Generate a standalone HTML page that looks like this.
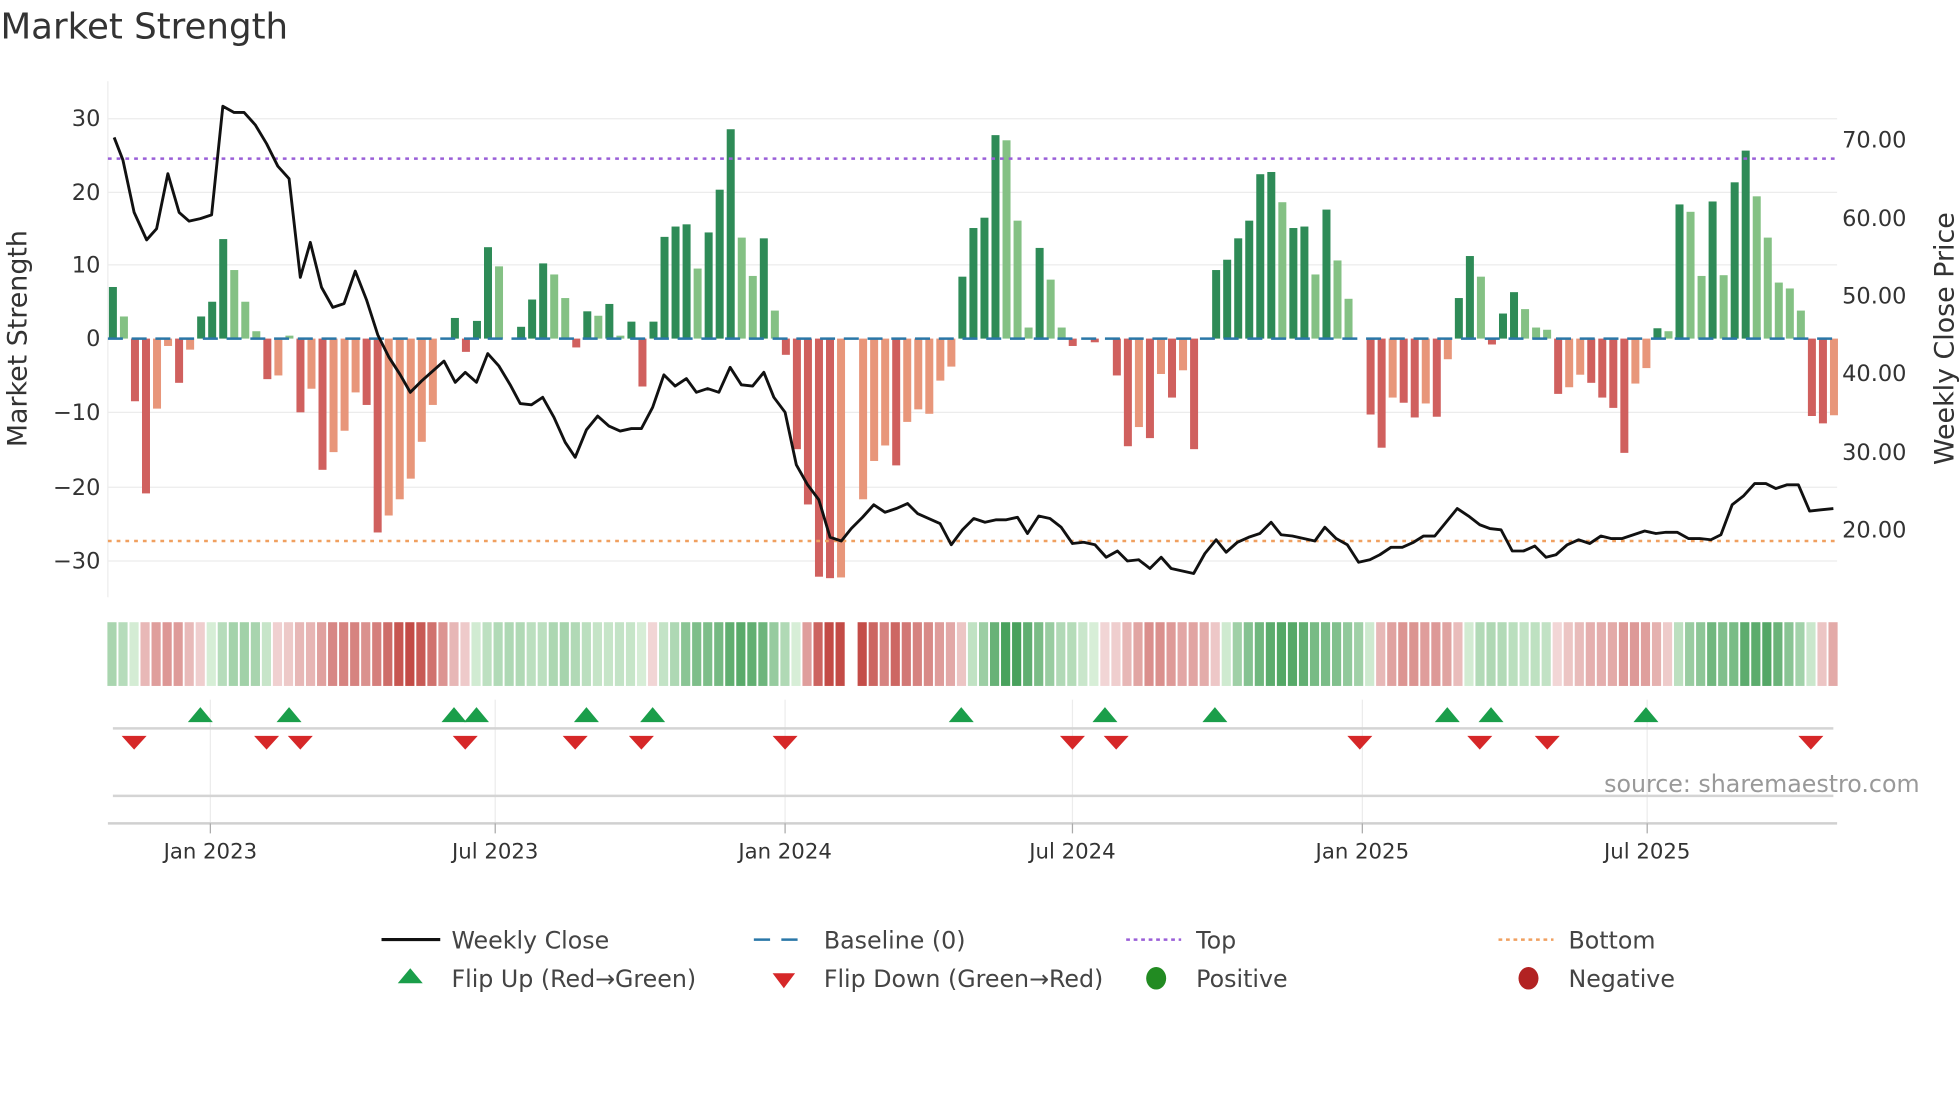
<!DOCTYPE html>
<html><head><meta charset="utf-8"><style>
html,body{margin:0;padding:0;background:#fff}
svg{display:block}
text{font-family:"DejaVu Sans","Liberation Sans",sans-serif}
</style></head><body>
<svg id="s" width="1960" height="1102" viewBox="0 0 1568 882" xmlns="http://www.w3.org/2000/svg">
<rect width="1568" height="882" fill="#fff"/>
<text x="0" y="31" font-size="28.5" fill="#333">Market Strength</text>
<g id="grid" stroke="#ececec" stroke-width="1">
<line x1="86" y1="95" x2="1470" y2="95"/><line x1="86" y1="154" x2="1470" y2="154"/><line x1="86" y1="212" x2="1470" y2="212"/>
<line x1="86" y1="330" x2="1470" y2="330"/><line x1="86" y1="390" x2="1470" y2="390"/><line x1="86" y1="449" x2="1470" y2="449"/>
<line x1="86" y1="65" x2="86" y2="478"/>
<line x1="168" y1="560" x2="168" y2="659"/><line x1="396" y1="560" x2="396" y2="659"/><line x1="628" y1="560" x2="628" y2="659"/>
<line x1="858" y1="560" x2="858" y2="659"/><line x1="1090" y1="560" x2="1090" y2="659"/><line x1="1318" y1="560" x2="1318" y2="659"/>
</g>
<g font-size="18" fill="#333" text-anchor="end">
<text x="80" y="101">30</text><text x="80" y="160">20</text><text x="80" y="218">10</text><text x="80" y="277">0</text>
<text x="80" y="336">−10</text><text x="80" y="396">−20</text><text x="80" y="455">−30</text>
</g>
<g font-size="18" fill="#333">
<text x="1474" y="118">70.00</text><text x="1474" y="181">60.00</text><text x="1474" y="243">50.00</text>
<text x="1474" y="305">40.00</text><text x="1474" y="368">30.00</text><text x="1474" y="430">20.00</text>
</g>
<text transform="translate(21,271) rotate(-90)" font-size="21.5" fill="#333" text-anchor="middle">Market Strength</text>
<text transform="translate(1563,271) rotate(-90)" font-size="21.5" fill="#333" text-anchor="middle">Weekly Close Price</text>
<g id="bars"></g>
<line x1="86" y1="271" x2="1470" y2="271" stroke="#2a77a8" stroke-width="2" stroke-dasharray="12,7"/>
<line x1="86" y1="127" x2="1470" y2="127" stroke="#9a5fd8" stroke-width="2" stroke-dasharray="3,4"/>
<line x1="86" y1="433" x2="1470" y2="433" stroke="#f0a060" stroke-width="2" stroke-dasharray="3,4"/>
<polyline id="price" fill="none" stroke="#111" stroke-width="2.3" stroke-linejoin="round"/>
<g id="heat"></g>
<line x1="90" y1="583" x2="1467" y2="583" stroke="#d4d4d4" stroke-width="2"/>
<line x1="90" y1="637" x2="1467" y2="637" stroke="#d4d4d4" stroke-width="2"/>
<line x1="86" y1="659" x2="1470" y2="659" stroke="#d0d0d0" stroke-width="2"/>
<g stroke="#aaa" stroke-width="1"><line x1="168" y1="659" x2="168" y2="667"/><line x1="396" y1="659" x2="396" y2="667"/><line x1="628" y1="659" x2="628" y2="667"/><line x1="858" y1="659" x2="858" y2="667"/><line x1="1090" y1="659" x2="1090" y2="667"/><line x1="1318" y1="659" x2="1318" y2="667"/></g>
<g id="tri"></g>
<text x="1536" y="634" font-size="19" fill="#999" text-anchor="end">source: sharemaestro.com</text>
<g font-size="17" fill="#333" text-anchor="middle">
<text x="168" y="687">Jan 2023</text><text x="396" y="687">Jul 2023</text><text x="628" y="687">Jan 2024</text>
<text x="858" y="687">Jul 2024</text><text x="1090" y="687">Jan 2025</text><text x="1318" y="687">Jul 2025</text>
</g>
<g font-size="19" fill="#444">
<line x1="305" y1="752" x2="352" y2="752" stroke="#111" stroke-width="2.5"/><text x="361" y="759">Weekly Close</text>
<line x1="603" y1="752" x2="647" y2="752" stroke="#2a77a8" stroke-width="2" stroke-dasharray="13,9"/><text x="659" y="759">Baseline (0)</text>
<line x1="901" y1="752" x2="945" y2="752" stroke="#9a5fd8" stroke-width="2" stroke-dasharray="3,3"/><text x="957" y="759">Top</text>
<line x1="1199" y1="752" x2="1243" y2="752" stroke="#f0a060" stroke-width="2" stroke-dasharray="3,3"/><text x="1255" y="759">Bottom</text>
<polygon points="328,775 338,787 318,787" fill="#1a9e4a"/><text x="361" y="790">Flip Up (Red→Green)</text>
<polygon points="618,779 636,779 627,791" fill="#d62728"/><text x="659" y="790">Flip Down (Green→Red)</text>
<ellipse cx="925" cy="783" rx="8" ry="9" fill="#228b22"/><text x="957" y="790">Positive</text>
<ellipse cx="1223" cy="783" rx="8" ry="9" fill="#b22222"/><text x="1255" y="790">Negative</text>
</g>
</svg>
<script>
var NS="http://www.w3.org/2000/svg";
var D="7d,3l,-8.5r,-21r,-9.5s,-1s,-6r,-1.5s,3d,5d,13.5d,9.3l,5l,1l,-5.5r,-5s,0.4l,-10r,-6.8s,-17.8r,-15.4s,-12.5s,-7.3s,-9r,-26.3r,-24s,-21.8s,-19s,-14s,-9s,0s,2.8d,-1.8r,2.4d,12.4d,9.8l,0s,1.6d,5.3d,10.2d,8.7l,5.5l,-1.2r,3.7d,3.1l,4.7d,0.4l,2.3d,-6.5r,2.3d,13.8d,15.2d,15.5d,9.5l,14.4d,20.2d,28.4d,13.7l,8.5l,13.6d,3.8l,-2.2r,-15r,-22.5r,-32.3r,-32.5r,-32.4s,0s,-21.8s,-16.6s,-14.5s,-17.2r,-11.3s,-9.6s,-10.2s,-5.7s,-3.8s,8.4d,15d,16.4d,27.6d,26.9l,16l,1.5l,12.3d,8l,1.5l,-1r,0s,-0.5r,0s,-5r,-14.6r,-12s,-13.5r,-4.8s,-8r,-4.3s,-15r,0s,9.3d,10.7d,13.6d,16d,22.3d,22.6d,18.5l,15d,15.2d,8.7l,17.5d,10.6l,5.4l,0s,-10.3r,-14.8r,-8s,-8.7r,-10.7r,-8.8s,-10.6r,-2.8s,5.5d,11.2d,8.4l,-0.8r,3.4d,6.3d,4l,1.5l,1.2l,-7.5r,-6.6s,-4.9s,-6r,-8r,-9.4r,-15.5r,-6.1s,-4s,1.4d,1l,18.2d,17.2l,8.5l,18.6d,8.6l,21.2d,25.5d,19.3l,13.7l,7.6l,6.8l,3.8l,-10.5r,-11.5r,-10.4s".split(",");
var col={d:"#2e8b57",l:"#84c184",r:"#d0605e",s:"#e8967a"};
var n=D.length,x0=90,st=8.83;
var bars=document.getElementById("bars"),heat=document.getElementById("heat");
var vals=[];
D.forEach(function(t,i){var v=parseFloat(t),c=t.slice(-1);vals.push(v);
 if(v==0)return;var x=x0+i*st;if(x>1468)return;var h=Math.abs(v)*5.9,y=v>0?271-h:271;
 var r=document.createElementNS(NS,"rect");r.setAttribute("x",x-3.2);r.setAttribute("width",6.4);r.setAttribute("y",y);r.setAttribute("height",h);r.setAttribute("fill",col[c]);bars.appendChild(r);});
for(var i=0;i<n;i++){var s=0,k=0;for(var j=Math.max(0,i-3);j<=i;j++){s+=vals[j];k++;}var m=s/k;
 var a=Math.min(1,Math.abs(m)/22);var c;
 if(m>=0){c="rgb("+Math.round(215-(215-70)*a)+","+Math.round(238-(238-160)*a)+","+Math.round(215-(215-90)*a)+")";}
 else{c="rgb("+Math.round(242-(242-195)*a)+","+Math.round(215-(215-75)*a)+","+Math.round(215-(215-70)*a)+")";}
 if(i==67)continue;
 var xx=x0+i*st-4.4;if(xx>1467)continue;var w=Math.min(st-1.5,1471-xx);
 var r=document.createElementNS(NS,"rect");r.setAttribute("x",xx);r.setAttribute("width",w);r.setAttribute("y",498);r.setAttribute("height",51);r.setAttribute("fill",c);heat.appendChild(r);}
var P="91,110 98,128 107,170 117,192 125,183 134,139 143,170 151,177 160,175 169,172 178,85 187,90 195,90 204,100 213,115 222,133 231,143 240,222 248,194 257,230 266,246 275,243 284,217 293,240 302,268 311,286 320,300 328,314 337,305 346,297 355,289 364,306 372,298 381,306 390,283 399,293 408,308 416,323 425,324 434,318 443,334 452,354 460,366 469,344 478,333 487,341 496,345 505,343 513,343 522,326 531,300 540,309 549,303 557,314 566,311 575,314 584,294 593,308 602,309 611,298 619,318 628,330 637,372 646,388 655,400 664,430 673,433 681,423 690,414 699,404 708,410 717,407 726,403 734,411 743,415 752,419 761,436 770,424 779,415 788,418 797,416 805,416 814,414 822,427 831,413 840,415 849,422 858,435 867,434 876,436 885,446 894,441 902,449 911,448 920,455 929,446 937,455 946,457 955,459 964,443 973,432 981,442 990,434 999,430 1008,427 1017,418 1025,428 1034,429 1043,431 1052,433 1060,422 1069,431 1078,436 1087,450 1096,448 1104,444 1113,438 1122,438 1131,434 1139,429 1148,429 1157,418 1166,407 1175,413 1184,420 1192,423 1201,424 1210,441 1219,441 1228,437 1237,446 1245,444 1254,436 1263,432 1272,435 1281,429 1289,431 1298,431 1307,428 1316,425 1325,427 1333,426 1342,426 1351,431 1360,431 1369,432 1377,428 1386,404 1395,397 1404,387 1413,387 1421,391 1430,388 1439,388 1448,409 1457,408 1467,407";
document.getElementById("price").setAttribute("points",P);
var tri=document.getElementById("tri");
[160,231,363,381,469,522,769,884,972,1158,1193,1317].forEach(function(x){var p=document.createElementNS(NS,"polygon");p.setAttribute("points",x+",566 "+(x+10)+",578 "+(x-10)+",578");p.setAttribute("fill","#1a9e4a");tri.appendChild(p);});
[107,213,240,372,460,513,628,858,893,1088,1184,1238,1449].forEach(function(x){var p=document.createElementNS(NS,"polygon");p.setAttribute("points",(x-10)+",589 "+(x+10)+",589 "+x+",600");p.setAttribute("fill","#d62728");tri.appendChild(p);});
</script>
</body></html>
